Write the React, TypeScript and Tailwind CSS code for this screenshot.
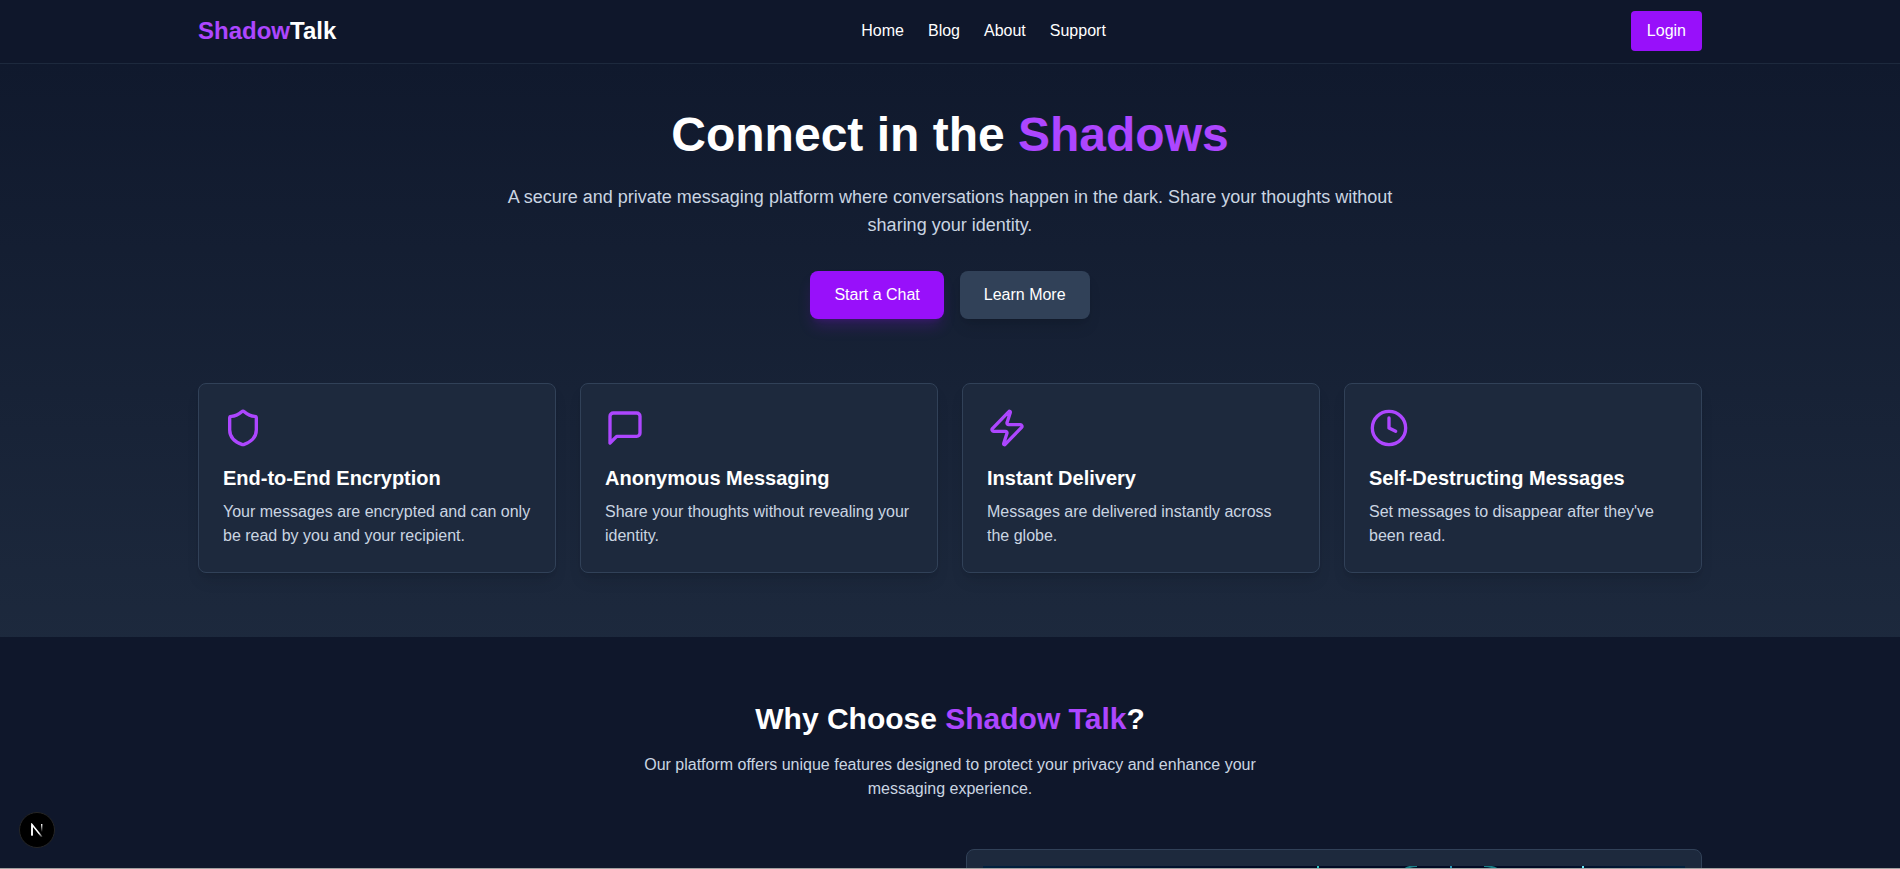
import { Clock, Shield, Zap } from "lucide-react";
import type { ComponentType } from "react";

function MessageBox({ className }: { className?: string }) {
  return (
    <svg
      className={className}
      viewBox="0 0 24 24"
      fill="none"
      stroke="currentColor"
      strokeWidth="2"
      strokeLinecap="round"
      strokeLinejoin="round"
      aria-hidden="true"
    >
      <path d="M21 15a2 2 0 0 1-2 2H7l-4 4V5a2 2 0 0 1 2-2h14a2 2 0 0 1 2 2z" />
    </svg>
  );
}

const links = ["Home", "Blog", "About", "Support"];

const features: { icon: ComponentType<{ className?: string }>; title: string; text: string }[] = [
  {
    icon: Shield,
    title: "End-to-End Encryption",
    text: "Your messages are encrypted and can only be read by you and your recipient.",
  },
  {
    icon: MessageBox,
    title: "Anonymous Messaging",
    text: "Share your thoughts without revealing your identity.",
  },
  {
    icon: Zap,
    title: "Instant Delivery",
    text: "Messages are delivered instantly across the globe.",
  },
  {
    icon: Clock,
    title: "Self-Destructing Messages",
    text: "Set messages to disappear after they've been read.",
  },
];

function Header() {
  return (
    <header className="border-b border-slate-800 bg-slate-900">
      <div className="mx-auto flex h-[63px] max-w-screen-2xl items-center justify-between px-4 pb-0.5">
        <a href="#" className="text-2xl font-bold">
          <span className="text-purple-500">Shadow</span>Talk
        </a>
        <nav className="flex gap-6">
          {links.map((label) => (
            <a key={label} href="#">
              {label}
            </a>
          ))}
        </nav>
        <button type="button" className="rounded bg-purple-600 px-4 py-2">
          Login
        </button>
      </div>
    </header>
  );
}

function Hero() {
  return (
    <section className="bg-linear-to-b from-[#10192d] to-slate-800 pt-[47px] pb-16">
      <div className="mx-auto max-w-screen-2xl px-4">
        <div className="mx-auto mb-16 max-w-4xl text-center">
          <h1 className="mb-6 text-5xl font-bold">
            Connect in the <span className="text-purple-500">Shadows</span>
          </h1>
          <p className="mb-8 text-lg text-slate-300">
            A secure and private messaging platform where conversations happen in the dark. Share
            your thoughts without sharing your identity.
          </p>
          <div className="flex justify-center gap-4">
            <button
              type="button"
              className="rounded-lg bg-purple-600 px-6 py-3 shadow-lg shadow-purple-600/20"
            >
              Start a Chat
            </button>
            <button type="button" className="rounded-lg bg-slate-700 px-6 py-3 shadow-lg">
              Learn More
            </button>
          </div>
        </div>
        <div className="grid gap-6 md:grid-cols-2 lg:grid-cols-4">
          {features.map(({ icon: Icon, title, text }) => (
            <article
              key={title}
              className="rounded-lg border border-slate-700 bg-slate-800 p-6 shadow-lg"
            >
              <Icon className="mb-4 size-10 text-purple-500" />
              <h3 className="mb-2 text-xl font-bold">{title}</h3>
              <p className="text-slate-300">{text}</p>
            </article>
          ))}
        </div>
      </div>
    </section>
  );
}

function Artwork() {
  return (
    <svg
      viewBox="0 0 702 320"
      className="block w-full"
      fill="none"
      role="img"
      aria-label="Network of glowing lines"
    >
      <defs>
        <linearGradient id="night" x1="0" x2="1">
          <stop offset="0" stopColor="#02213f" />
          <stop offset="0.4" stopColor="#010a24" />
          <stop offset="0.8" stopColor="#010a24" />
          <stop offset="1" stopColor="#02213f" />
        </linearGradient>
      </defs>
      <rect width="702" height="320" fill="url(#night)" />
      <g strokeWidth="2">
        <path d="M335 0v60" stroke="#2dc4c4" />
        <path d="M468 0v60" stroke="#2496b8" />
        <path d="M600 0v60" stroke="#67e8f9" />
        <path d="M422 3q5-3 12-3M501 0q7 0 13 3" stroke="#1a8088" />
      </g>
    </svg>
  );
}

function WhyChoose() {
  return (
    <section className="bg-slate-900 py-16">
      <div className="mx-auto max-w-screen-2xl px-4">
        <div className="mx-auto mb-12 max-w-2xl text-center">
          <h2 className="mb-4 text-3xl font-bold">
            Why Choose <span className="text-purple-500">Shadow Talk</span>?
          </h2>
          <p className="text-slate-300">
            Our platform offers unique features designed to protect your privacy and enhance your
            messaging experience.
          </p>
        </div>
        <div className="grid gap-8 md:grid-cols-2">
          <div className="md:col-start-2">
            <div className="rounded-lg border border-slate-700 bg-slate-800 p-4">
              <Artwork />
            </div>
          </div>
        </div>
      </div>
    </section>
  );
}

function DevBadge() {
  return (
    <button
      type="button"
      aria-label="Open developer tools"
      className="fixed bottom-[21px] left-[19px] grid size-9 place-items-center rounded-full border border-neutral-800 bg-black"
    >
      <svg width="14" height="14" viewBox="0 0 14 14" fill="none" aria-hidden="true">
        <defs>
          <linearGradient id="diagonal" x1="7" y1="7" x2="12.5" y2="14" gradientUnits="userSpaceOnUse">
            <stop offset="0.4" stopColor="#fff" />
            <stop offset="1" stopColor="#fff" stopOpacity="0.1" />
          </linearGradient>
          <linearGradient id="upright" x1="0" y1="1" x2="0" y2="9" gradientUnits="userSpaceOnUse">
            <stop stopColor="#fff" />
            <stop offset="1" stopColor="#fff" stopOpacity="0" />
          </linearGradient>
        </defs>
        <path d="M2 12.5V1.6L12 14" stroke="url(#diagonal)" strokeWidth="1.6" />
        <path d="M2 12.5V1.2" stroke="#fff" strokeWidth="1.5" />
        <path d="M11.7 1v8" stroke="url(#upright)" strokeWidth="1.4" />
      </svg>
    </button>
  );
}

export default function App() {
  return (
    <div className="h-screen overflow-hidden border-b border-neutral-400 bg-slate-900 font-['Liberation_Sans',Arial,sans-serif] text-white">
      <Header />
      <main>
        <Hero />
        <WhyChoose />
      </main>
      <DevBadge />
    </div>
  );
}
